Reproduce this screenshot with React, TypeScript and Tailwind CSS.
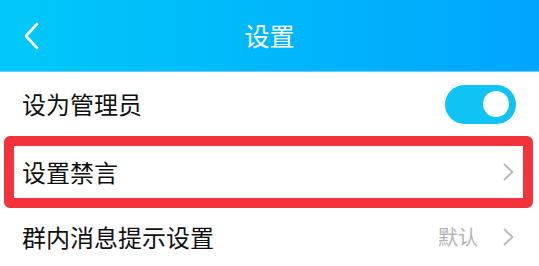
export default function App() {
  return (
    <div
      className="w-[539px] h-[266px] overflow-hidden bg-white"
      style={{ fontFamily: '"Noto Sans CJK SC", "Noto Sans", sans-serif' }}
    >
      {/* Header */}
      <div className="relative h-[72px] flex items-center justify-center bg-linear-to-r from-[#00c9f8] to-[#00a5fd] border-b border-[#5fd0fb]">
        <svg
          className="absolute left-[23px] top-[22px]"
          width="16"
          height="28"
          viewBox="0 0 16 28"
          fill="none"
        >
          <polyline
            points="14,2 3,14 14,26"
            stroke="white"
            strokeWidth="2.6"
            strokeLinecap="round"
            strokeLinejoin="round"
          />
        </svg>
        <span className="text-white text-[25px] leading-none">设置</span>
      </div>

      {/* 设为管理员 */}
      <div className="h-[64px] flex items-center justify-between pl-[22px] pr-[23px]">
        <span className="text-[24px] text-[#111] leading-none">设为管理员</span>
        <div className="w-[71px] h-[39px] rounded-full bg-[#0fc3f4] flex items-center justify-end pr-[7px]">
          <div className="w-[26px] h-[26px] rounded-full bg-white" />
        </div>
      </div>

      {/* 设置禁言 (highlighted) */}
      <div className="ml-[4px] mr-[6px] h-[72px] flex items-center justify-between border-[10px] border-[#f2333b] rounded-[6px] pl-[8px] pr-[9px]">
        <span className="text-[24px] text-[#111] leading-none">设置禁言</span>
        <Chevron />
      </div>

      {/* 群内消息提示设置 */}
      <div className="h-[58px] flex items-center justify-between pl-[22px] pr-[25px]">
        <span className="text-[24px] text-[#111] leading-none">群内消息提示设置</span>
        <div className="flex items-center gap-[25px]">
          <span className="text-[20px] text-[#b3b3b3] leading-none">默认</span>
          <Chevron />
        </div>
      </div>
    </div>
  );
}

function Chevron() {
  return (
    <svg width="11" height="18" viewBox="0 0 11 18" fill="none">
      <polyline
        points="1.5,1.5 9.5,9 1.5,16.5"
        stroke="#b8b8b8"
        strokeWidth="1.8"
        strokeLinecap="round"
        strokeLinejoin="round"
      />
    </svg>
  );
}
